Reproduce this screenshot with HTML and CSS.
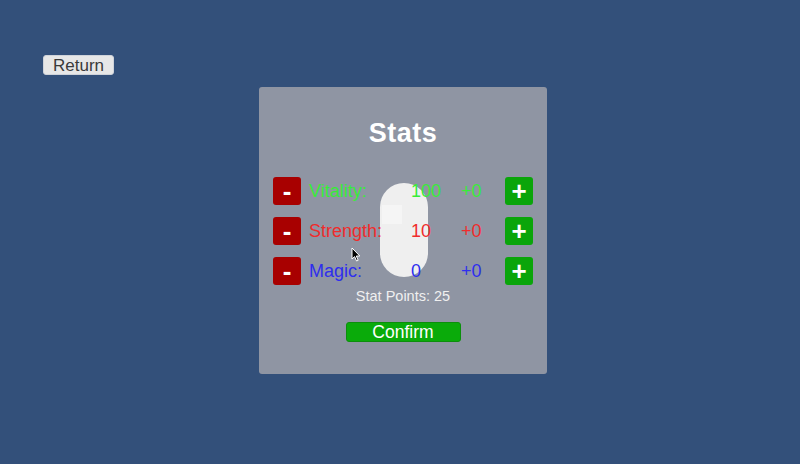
FILE: index.html
```html
<!DOCTYPE html>
<html>
<head>
<meta charset="utf-8">
<link rel="stylesheet" href="styles.css">
</head>
<body>
<div class="screen">
  <button class="return-btn">Return</button>
  <div class="panel">
    <div class="pill"><div class="pill-shine"></div></div>
    <h1 class="title">Stats</h1>
    <div class="stats">
      <button class="btn minus">-</button>
      <span class="label vit">Vitality:</span>
      <span class="value vit">100</span>
      <span class="bonus vit">+0</span>
      <button class="btn plus">+</button>

      <button class="btn minus">-</button>
      <span class="label str">Strength:</span>
      <span class="value str">10</span>
      <span class="bonus str">+0</span>
      <button class="btn plus">+</button>

      <button class="btn minus">-</button>
      <span class="label mag">Magic:</span>
      <span class="value mag">0</span>
      <span class="bonus mag">+0</span>
      <button class="btn plus">+</button>
    </div>
    <div class="points">Stat Points: 25</div>
    <div class="confirm-row"><button class="confirm">Confirm</button></div>
    <svg class="cursor" width="10" height="15" viewBox="0 0 10 15"><path d="M1 1 L1 12 L3.6 9.6 L5.6 14 L7.2 13.3 L5.3 9 L8.8 9 Z" fill="#000" stroke="#fff" stroke-width="1"/></svg>
  </div>
</div>
</body>
</html>
```
FILE: styles.css
```css
html, body {
  margin: 0;
  padding: 0;
  background: #33507a;
  font-family: "Liberation Sans", Arial, sans-serif;
}
.screen {
  width: 800px;
  height: 464px;
  padding: 55px 0 0 43px;
  box-sizing: border-box;
  overflow: hidden;
}
.return-btn {
  display: block;
  width: 71px;
  height: 20px;
  padding: 1px 0 0;
  margin: 0;
  background: #e7e7e7;
  border: 1px solid #cfd3da;
  border-radius: 3px;
  color: #3a3a3a;
  font-family: "Liberation Sans", Arial, sans-serif;
  font-size: 17px;
  line-height: 18px;
}
.panel {
  position: relative;
  width: 288px;
  height: 287px;
  margin: 12px 0 0 216px;
  padding: 30px 0 0 14px;
  box-sizing: border-box;
  background: #8f95a3;
  border-radius: 3px;
}
.pill {
  position: absolute;
  left: 121px;
  top: 96px;
  width: 48px;
  height: 94px;
  border-radius: 24px;
  background: #efefef;
  z-index: 0;
}
.pill-shine {
  position: absolute;
  left: 2px;
  top: 22px;
  width: 20px;
  height: 19px;
  background: #f5f5f5;
}
.title {
  position: relative;
  margin: 0 0 28px -14px;
  text-align: center;
  font-size: 27px;
  line-height: 32px;
  font-weight: bold;
  color: #fff;
  letter-spacing: 0.5px;
}
.stats {
  position: relative;
  z-index: 1;
  display: grid;
  grid-template-columns: 28px 110px 50px 44px 28px;
  grid-auto-rows: 28px;
  row-gap: 12px;
  align-items: center;
}
.btn {
  width: 28px;
  height: 28px;
  padding: 0;
  margin: 0;
  border: none;
  border-radius: 3px;
  color: #fff;
  font-family: "Liberation Sans", Arial, sans-serif;
  font-weight: bold;
  font-size: 26px;
  line-height: 26px;
}
.minus { background: #a80000; }
.plus { background: #0aa50a; }
.label { padding-left: 8px; font-size: 18px; }
.value, .bonus { font-size: 18px; }
.vit { color: #38ec38; }
.str { color: #f02c2c; }
.mag { color: #2e2eee; }
.points {
  position: relative;
  margin: 3px 0 0 -14px;
  text-align: center;
  font-size: 14.5px;
  line-height: 17px;
  color: #f0f0f0;
}
.confirm-row {
  display: flex;
  justify-content: center;
  margin: 17px 0 0 -14px;
}
.confirm {
  width: 115px;
  height: 20px;
  padding: 0;
  margin: 0;
  background: #0aab0a;
  border: 1px solid #0b8f0b;
  border-radius: 3px;
  color: #fff;
  font-family: "Liberation Sans", Arial, sans-serif;
  font-size: 17.5px;
  line-height: 18px;
}
.cursor {
  position: absolute;
  left: 92px;
  top: 160px;
  z-index: 2;
}
```
